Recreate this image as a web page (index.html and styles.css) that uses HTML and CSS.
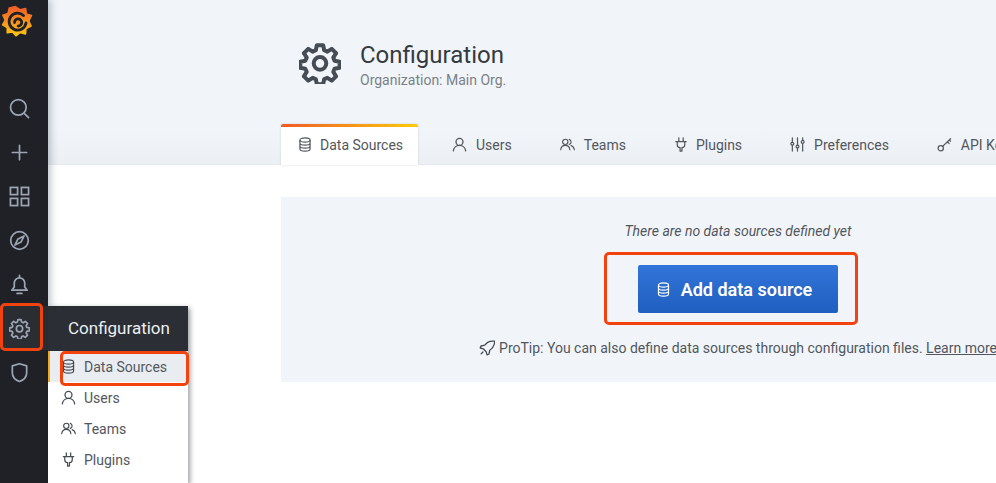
FILE: index.html
```html
<!DOCTYPE html>
<html lang="en">
<head>
<meta charset="utf-8">
<title>Configuration</title>
<link rel="stylesheet" href="styles.css">
</head>
<body>
<svg class="defs" width="0" height="0" aria-hidden="true">
  <defs>
    <symbol id="i-db" viewBox="0 0 14 16"><g fill="none" stroke="currentColor" stroke-width="1.3"><ellipse cx="7" cy="3.2" rx="5.4" ry="2.3"/><path d="M1.6 3.2v9.6c0 1.3 2.4 2.3 5.4 2.3s5.4-1 5.4-2.3V3.2M1.6 6.4c0 1.3 2.4 2.3 5.4 2.3s5.4-1 5.4-2.3M1.6 9.6c0 1.3 2.4 2.3 5.4 2.3s5.4-1 5.4-2.3"/></g></symbol>
    <symbol id="i-user" viewBox="0 0 16 16"><g fill="none" stroke="currentColor" stroke-width="1.4" stroke-linecap="round"><circle cx="8" cy="5.2" r="3.7"/><path d="M1.4 14.8c.4-3.4 3.1-5.9 6.6-5.9s6.200 2.500 6.600 5.900"/></g></symbol>
    <symbol id="i-users" viewBox="0 0 17 14"><g fill="none" stroke="currentColor" stroke-width="1.3" stroke-linecap="round"><circle cx="6" cy="4" r="3"/><path d="M.8 13c.3-3 2.400-5 5.200-5s4.900 2 5.200 5M10.500 1.200a3 3 0 0 1 0 5.700M12.600 8.300c2 .7 3.300 2.400 3.600 4.700"/></g></symbol>
    <symbol id="i-plug" viewBox="0 0 14 16"><g fill="none" stroke="currentColor" stroke-width="1.3" stroke-linecap="round" stroke-linejoin="round"><path d="M1.500 5h11M3 5v3.200c0 1.800 1.500 3 3 3.200V15h2v-3.600c1.500-.2 3-1.400 3-3.200V5M4.700 1v4M9.300 1v4"/></g></symbol>
    <symbol id="i-sliders" viewBox="0 0 16 16"><g fill="none" stroke="currentColor" stroke-width="1.300" stroke-linecap="round"><path d="M2.500 1v4.500M2.500 9v6M8 1v7.500M8 12v3M13.500 1v2.500M13.500 7v8"/><circle cx="2.500" cy="7.200" r="1.500"/><circle cx="8" cy="10.200" r="1.500"/><circle cx="13.500" cy="5.200" r="1.500"/></g></symbol>
    <symbol id="i-key" viewBox="0 0 16 16"><g fill="none" stroke="currentColor" stroke-width="1.300" stroke-linecap="round"><circle cx="4" cy="12" r="2.800"/><path d="M6 10 14.500 1.800M11 5l2 2M13 3l1.500 1.500"/></g></symbol>
    <symbol id="i-gear" viewBox="0 0 24 24"><g class="gear-lines" fill="none" stroke="currentColor" stroke-linejoin="round"><path d="M10.200 1.800h3.600l.6 2.900 1.800.8 2.500-1.600 2.500 2.500-1.600 2.500.7 1.800 2.900.6v3.400l-2.900.6-.7 1.800 1.600 2.500-2.500 2.500-2.500-1.600-1.800.7-.6 2.900h-3.600l-.6-2.900-1.800-.7-2.500 1.600-2.500-2.500 1.600-2.500-.8-1.800-2.900-.6v-3.400l2.900-.6.8-1.800-1.600-2.500 2.500-2.500 2.500 1.600 1.800-.8z"/><circle cx="12" cy="12.200" r="3.600"/></g></symbol>
    <linearGradient id="g-logo" gradientUnits="userSpaceOnUse" x1="16" y1="31" x2="16" y2="1"><stop offset="0" stop-color="#fdc814"/><stop offset=".45" stop-color="#f7941d"/><stop offset="1" stop-color="#f05a28"/></linearGradient>
  </defs>
</svg>

<nav class="sidenav">
  <a class="logo">
    <svg viewBox="0 0 32 32" width="32" height="32"><circle cx="16" cy="16" r="12.500" fill="url(#g-logo)"/><path fill="url(#g-logo)" stroke="url(#g-logo)" stroke-width="1.500" stroke-linejoin="round" d="M14.500 1.500 19 4.800 24.700 3.500 25.300 9 30.500 10.500 27.800 16 30.200 21 25 23.500 24.500 29 19 27.500 15 30.800 11.500 27 6.200 27.800 6.200 22.500 1.500 19.800 4.200 15 1.800 10.200 7 8.500 8.200 3z"/><path fill="none" stroke="#1f2126" stroke-width="2.800" stroke-linecap="round" d="M22.500 10.500A8.500 8.500 0 1 0 25 18M13.500 17.500a3.600 3.600 0 1 1 3.600 3.600"/></svg>
  </a>
  <ul class="nav-list">
    <li class="nav-item"><svg viewBox="0 0 22 22"><g fill="none" stroke="currentColor" stroke-width="1.800" stroke-linecap="round"><circle cx="9.800" cy="9.800" r="8.200"/><path d="M16 16l4.500 4.500"/></g></svg></li>
    <li class="nav-item"><svg viewBox="0 0 22 22"><path fill="none" stroke="currentColor" stroke-width="1.800" stroke-linecap="round" d="M11 3.500v15M3.500 11h15"/></svg></li>
    <li class="nav-item"><svg viewBox="0 0 22 22"><g fill="none" stroke="currentColor" stroke-width="1.800"><rect x="1.500" y="1.500" width="7.500" height="7.500"/><rect x="13" y="1.500" width="7.500" height="7.500"/><rect x="1.500" y="13" width="7.500" height="7.500"/><rect x="13" y="13" width="7.500" height="7.500"/></g></svg></li>
    <li class="nav-item"><svg viewBox="0 0 22 22"><g fill="none" stroke="currentColor" stroke-width="1.800" stroke-linejoin="round"><circle cx="11" cy="11" r="9.200"/><path d="M15.800 6.200l-3.200 6.400-6.400 3.200 3.200-6.400z"/></g></svg></li>
    <li class="nav-item"><svg viewBox="0 0 22 22"><g fill="none" stroke="currentColor" stroke-width="1.800" stroke-linejoin="round" stroke-linecap="round"><path d="M11 1.500v2M5.500 9.500a5.500 5.500 0 0 1 11 0v4l2.500 3.500H3l2.500-3.500zM8.500 20.300h5"/></g></svg></li>
    <li class="nav-item nav-item-active"><svg viewBox="0 0 24 24"><use href="#i-gear"/></svg></li>
    <li class="nav-item"><svg viewBox="0 0 22 22"><path fill="none" stroke="currentColor" stroke-width="1.800" stroke-linejoin="round" d="M11 1.800 18.500 4v7.500c0 4.200-3 7.200-7.500 9-4.500-1.800-7.500-4.800-7.500-9V4z"/></svg></li>
  </ul>
</nav>

<main class="main">
  <header class="page-header">
    <div class="title-row">
      <svg class="title-icon" viewBox="0 0 24 24"><use href="#i-gear"/></svg>
      <div class="title-text">
        <h1 class="title">Configuration</h1>
        <p class="subtitle">Organization: Main Org.</p>
      </div>
    </div>
    <div class="tabs">
      <a class="tab tab-active"><svg class="tab-icon tab-icon-db"><use href="#i-db"/></svg>Data Sources</a>
      <a class="tab"><svg class="tab-icon"><use href="#i-user"/></svg>Users</a>
      <a class="tab"><svg class="tab-icon"><use href="#i-users"/></svg>Teams</a>
      <a class="tab"><svg class="tab-icon tab-icon-db"><use href="#i-plug"/></svg>Plugins</a>
      <a class="tab"><svg class="tab-icon"><use href="#i-sliders"/></svg>Preferences</a>
      <a class="tab"><svg class="tab-icon"><use href="#i-key"/></svg>API Keys</a>
    </div>
  </header>
  <section class="content">
    <div class="empty-panel">
      <p class="empty-title">There are no data sources defined yet</p>
      <div class="cta-mark">
        <a class="cta"><svg class="cta-icon"><use href="#i-db"/></svg>Add data source</a>
      </div>
      <p class="protip"><svg class="rocket" viewBox="0 0 16 16"><g fill="none" stroke="currentColor" stroke-width="1.300" stroke-linejoin="round" stroke-linecap="round"><path d="M15 1.200c-4-.5-7 .8-9.200 4L2 6l-.8 2 3 .8 3 3 .8 3 2-.8.800-3.800c3.200-2.200 4.700-5.200 5-9z"/><path d="M4 12l-1.800 1.800"/></g></svg>ProTip: You can also define data sources through configuration files. <a class="learn">Learn more</a></p>
    </div>
  </section>
</main>

<div class="flyout">
  <div class="flyout-head">Configuration</div>
  <ul class="flyout-list">
    <li class="flyout-item flyout-active"><svg class="fly-icon"><use href="#i-db"/></svg>Data Sources</li>
    <li class="flyout-item"><svg class="fly-icon"><use href="#i-user"/></svg>Users</li>
    <li class="flyout-item"><svg class="fly-icon"><use href="#i-users"/></svg>Teams</li>
    <li class="flyout-item"><svg class="fly-icon"><use href="#i-plug"/></svg>Plugins</li>
  </ul>
</div>
<div class="mark mark-gear"></div>
<div class="mark mark-item"></div>
</body>
</html>
```

FILE: styles.css
```css
* { box-sizing: border-box; }
html, body { height: 100%; }
body {
  margin: 0;
  display: flex;
  height: 483px;
  overflow: hidden;
  background: #fff;
  color: #464c54;
  font-family: Roboto, "Liberation Sans", sans-serif;
  font-size: 14px;
}
.defs { position: absolute; }
ul { list-style: none; margin: 0; padding: 0; }
p, h1 { margin: 0; }
.gear-lines { stroke-width: var(--gear-stroke, 1.9); }

.sidenav {
  width: 48px;
  flex: none;
  background: #1f2126;
  box-shadow: 3px 0 7px rgba(60, 70, 90, .3);
  position: relative;
  z-index: 2;
}
.logo { display: block; padding: 5px 0 0 1px; height: 86px; }
.logo svg { display: block; }
.nav-item {
  height: 44px;
  display: flex;
  align-items: center;
  justify-content: center;
  padding-right: 10px;
  color: #9da5b4;
}
.nav-item svg { width: 21px; height: 21px; }
.nav-item-active { background: #2a2e33; }

.main { flex: 1; min-width: 0; overflow: hidden; }
.page-header {
  height: 165px;
  padding: 42px 0 0 233px;
  background: linear-gradient(#f1f5f9 80%, #eceff4);
  border-bottom: 1px solid #e4e8ee;
  display: flex;
  flex-direction: column;
}
.title-row { display: flex; align-items: center; height: 46px; padding-left: 18px; }
.title-icon { --gear-stroke: 2.3; width: 42px; height: 42px; margin: 0 19px 4px 0; color: #464c54; }
.title { font-size: 24px; font-weight: 400; line-height: 30px; color: #343b40; }
.subtitle { font-size: 14px; line-height: 20px; color: #7b8087; }

.tabs { display: flex; gap: 16px; margin-top: 36px; height: 41px; white-space: nowrap; }
.tab {
  display: flex;
  align-items: center;
  height: 41px;
  padding: 0 15px 0 17px;
  font-size: 14px;
  color: #52575d;
  flex: none;
}
.tab-active {
  background: #fff;
  position: relative;
  width: 137px;
  margin-right: 1px;
  box-shadow: 0 0 2px rgba(90, 100, 120, .25);
}
.tab-active::before {
  content: "";
  position: absolute;
  left: 0; right: 0; top: 0;
  height: 3px;
  border-radius: 2px 2px 0 0;
  background: linear-gradient(90deg, #f05a28, #fbca0a);
}
.tab-icon { width: 15px; height: 15px; margin-right: 9px; flex: none; }
.tab-icon-db { width: 14px; margin-right: 8px; }

.empty-panel {
  margin: 32px 0 0 233px;
  width: 914px;
  height: 185px;
  background: #f1f5f9;
  display: flex;
  flex-direction: column;
  align-items: center;
  padding-top: 24px;
}
.empty-title { font-style: italic; font-size: 14px; line-height: 20px; color: #52575d; }
.cta-mark {
  margin: 11px 15px 0 0;
  padding-left: 15px;
  width: 254px;
  height: 73px;
  border: 3px solid #f2430f;
  border-radius: 5px;
  display: flex;
  align-items: center;
  justify-content: center;
}
.cta {
  flex: none;
  width: 200px;
  height: 48px;
  padding: 1px 7px 0 0;
  border-radius: 2px;
  background: linear-gradient(#3274d9, #1f5fc0);
  color: #fff;
  font-size: 18px;
  font-weight: 600;
  display: flex;
  align-items: center;
  justify-content: center;
}
.cta-icon { width: 13px; height: 15px; margin-right: 11px; color: #fff; }
.protip { margin-top: 13px; font-size: 14px; line-height: 20px; color: #52575d; display: flex; align-items: center; white-space: pre; }
.rocket { width: 16px; height: 16px; margin-right: 4px; color: #464c54; }
.learn { text-decoration: underline; color: #52575d; }

.flyout {
  position: absolute;
  left: 48px;
  top: 306px;
  width: 140px;
  height: 177px;
  background: #fff;
  box-shadow: 2px 2px 5px rgba(30, 35, 45, .45);
  z-index: 3;
}
.flyout-head {
  height: 45px;
  padding: 10px 0 0 20px;
  background: #2b2f35;
  color: #eceef0;
  font-size: 17px;
  line-height: 25px;
}
.flyout-item {
  height: 31px;
  display: flex;
  align-items: center;
  padding-left: 13px;
  font-size: 14px;
  color: #52575d;
}
.flyout-active { background: #e9edf2; box-shadow: inset 2px 0 0 #f5a81c; }
.fly-icon { width: 15px; height: 15px; margin-right: 8px; flex: none; color: #464c54; }

.mark {
  position: absolute;
  border: 3px solid #f2430f;
  border-radius: 5px;
  z-index: 4;
}
.mark-gear { left: 0; top: 303px; width: 43px; height: 48px; }
.mark-item { left: 60px; top: 351px; width: 129px; height: 35px; }
```
